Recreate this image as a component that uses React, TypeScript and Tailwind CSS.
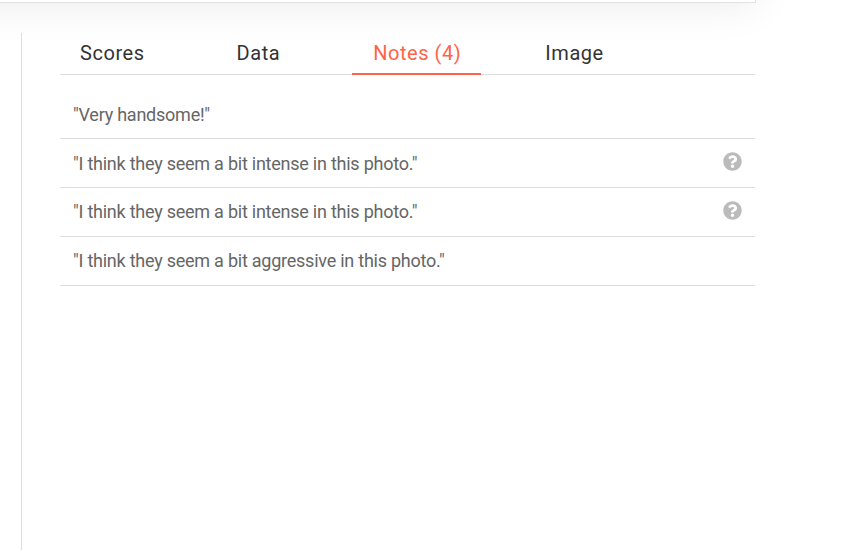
import React from 'react'
import { FaQuestionCircle } from 'react-icons/fa'

const notes = [
  { text: '"Very handsome!"', flagged: false, pad: 'pt-[12px]', iconTop: '' },
  { text: '"I think they seem a bit intense in this photo."', flagged: true, pad: 'pt-[12px]', iconTop: 'mt-[1px]' },
  { text: '"I think they seem a bit intense in this photo."', flagged: true, pad: 'pt-[11px]', iconTop: 'mt-[1.5px]' },
  { text: '"I think they seem a bit aggressive in this photo."', flagged: false, pad: 'pt-[11px]', iconTop: '' },
]

export default function App() {
  return (
    <div className="relative w-[859px] h-[550px] overflow-hidden bg-white font-['Roboto',sans-serif]">
      {/* card above runs off the top of the page, only its bottom edge shows */}
      <div className="relative z-10 -ml-[60px] -mt-[297px] h-[300px] w-[816px] border-b border-r border-[#e2e2e2] bg-white shadow-[0_2px_40px_rgba(0,0,0,0.08)]" />
      <div className="ml-[21px] mt-[30px] h-[517px] border-l border-[#dddddd] pl-[38px]">
        <div className="w-[695px]">
          <div className="flex h-[42px] border-b border-[#dddddd] text-[20px] leading-[40px] tracking-[0.55px] text-[#333333]">
            <div className="pl-[20px] pr-[21px]">Scores</div>
            <div className="ml-[50px] px-[21px]">Data</div>
            <div className="ml-[51px] h-[42px] border-b-2 border-[#ff6347] pl-[21px] pr-[20px] text-[#ff6347]">Notes (4)</div>
            <div className="ml-[64px]">Image</div>
          </div>
          <div className="pt-[15px]">
            {notes.map((note, i) => (
              <div key={i} className={`flex h-[49px] items-start justify-between border-b border-[#dddddd] pl-[13px] pr-[13px] text-[18px] leading-[26px] tracking-[-0.24px] text-[#666666] ${note.pad}`}>
                <span>{note.text}</span>
                {note.flagged && <FaQuestionCircle className={`text-[#bbbbbb] ${note.iconTop}`} size={19} />}
              </div>
            ))}
          </div>
        </div>
      </div>
    </div>
  )
}
